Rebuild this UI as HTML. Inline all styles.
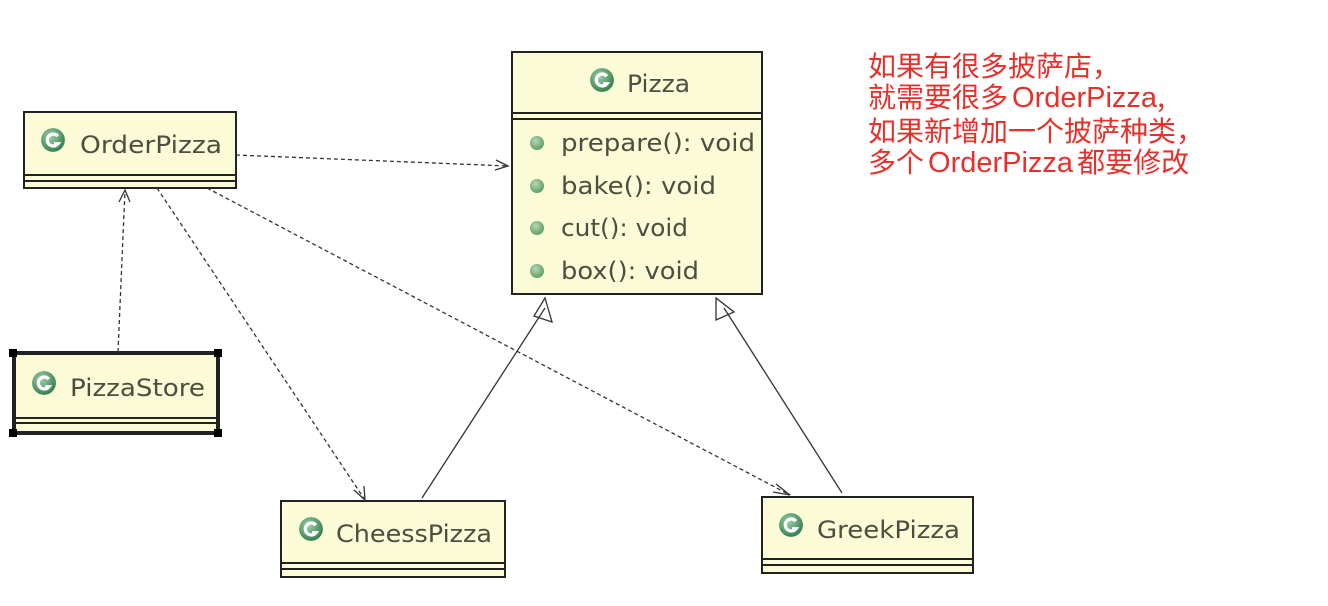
<!DOCTYPE html>
<html><head><meta charset="utf-8"><style>
body{margin:0;background:#fff;width:1328px;height:606px;overflow:hidden}
svg text{font-family:"DejaVu Sans","Liberation Sans",sans-serif;fill:#4e4e40}
.r{position:absolute;left:868px;color:#e8302a;font:28px/31px "Noto Sans CJK SC",sans-serif;top:50px;white-space:nowrap}
.r span{font:29px "Liberation Sans",sans-serif;margin:0 4px}
</style></head><body>
<svg width="1328" height="606" style="position:absolute;left:0;top:0">
<defs>
<radialGradient id="g" cx="40%" cy="35%" r="70%"><stop offset="0" stop-color="#9fd0a8"/><stop offset="1" stop-color="#2f7a4a"/></radialGradient>
<radialGradient id="d" cx="40%" cy="35%" r="70%"><stop offset="0" stop-color="#b7d8b4"/><stop offset="1" stop-color="#5a9a62"/></radialGradient>
<symbol id="c" viewBox="0 0 24 24"><circle cx="12" cy="12" r="11" fill="url(#g)"/><path d="M16.5 8.5A5.5 5.5 0 1 0 16.5 15.5L13 15.5" fill="none" stroke="#fff" stroke-width="3"/></symbol>
</defs>
<g fill="#fbfbd8" stroke="#222" stroke-width="2">
<rect x="512" y="52" width="250" height="242"/>
<rect x="24" y="112" width="212" height="76"/>
<rect x="14" y="353" width="204" height="80" stroke-width="4"/>
<rect x="281" y="501" width="224" height="76"/>
<rect x="762" y="497" width="211" height="76"/>
</g>
<g stroke="#222" stroke-width="2">
<line x1="512" y1="113" x2="762" y2="113"/><line x1="512" y1="119" x2="762" y2="119"/>
<line x1="24" y1="175" x2="236" y2="175"/><line x1="24" y1="181" x2="236" y2="181"/>
<line x1="14" y1="418" x2="218" y2="418"/><line x1="14" y1="423" x2="218" y2="423"/>
<line x1="281" y1="563" x2="505" y2="563"/><line x1="281" y1="569" x2="505" y2="569"/>
<line x1="762" y1="559" x2="973" y2="559"/><line x1="762" y1="565" x2="973" y2="565"/>
</g>
<g fill="#000"><rect x="9" y="349" width="8" height="8"/><rect x="214" y="349" width="8" height="8"/><rect x="9" y="429" width="8" height="8"/><rect x="214" y="429" width="8" height="8"/></g>
<g fill="none" stroke="#333" stroke-width="1.3">
<path d="M236 155 L508 166" stroke-dasharray="4 3"/><path d="M496 160 L508 166 L495 170"/>
<path d="M118 352 L125 190" stroke-dasharray="4 3"/><path d="M119 202 L125 190 L130 202"/>
<path d="M157 188 L365 500" stroke-dasharray="4 3"/><path d="M354 490 L365 500 L364 486"/>
<path d="M207 188 L790 495" stroke-dasharray="4 3"/><path d="M776 484 L790 495 L773 492"/>
<path d="M422 498 L545 308"/><path d="M545 298 L534 316 L552 322 Z"/>
<path d="M842 493 L724 308"/><path d="M716 298 L716 320 L734 312 Z"/>
</g>
<use href="#c" x="589" y="67" width="26" height="26"/>
<use href="#c" x="40" y="127" width="26" height="26"/>
<use href="#c" x="31" y="370" width="26" height="26"/>
<use href="#c" x="298" y="516" width="26" height="26"/>
<use href="#c" x="778" y="512" width="26" height="26"/>
<g font-size="24">
<text x="627" y="92" textLength="63" lengthAdjust="spacingAndGlyphs">Pizza</text>
<text x="80" y="153" textLength="142" lengthAdjust="spacingAndGlyphs">OrderPizza</text>
<text x="70" y="396" textLength="135" lengthAdjust="spacingAndGlyphs">PizzaStore</text>
<text x="336" y="542" textLength="156" lengthAdjust="spacingAndGlyphs">CheessPizza</text>
<text x="817" y="538" textLength="143" lengthAdjust="spacingAndGlyphs">GreekPizza</text>
<text x="561" y="151" textLength="194" lengthAdjust="spacingAndGlyphs">prepare(): void</text>
<text x="561" y="194" textLength="155" lengthAdjust="spacingAndGlyphs">bake(): void</text>
<text x="561" y="236" textLength="127" lengthAdjust="spacingAndGlyphs">cut(): void</text>
<text x="561" y="279" textLength="138" lengthAdjust="spacingAndGlyphs">box(): void</text>
</g>
<g fill="url(#d)"><circle cx="537" cy="143" r="7"/><circle cx="537" cy="186" r="7"/><circle cx="537" cy="228" r="7"/><circle cx="537" cy="271" r="7"/></g>
</svg>
<div class="r">如果有很多披萨店，<br>就需要很多<span style="margin-right:0">OrderPizza</span>,<br>如果新增加一个披萨种类，<br>多个<span>OrderPizza</span>都要修改</div>
</body></html>
